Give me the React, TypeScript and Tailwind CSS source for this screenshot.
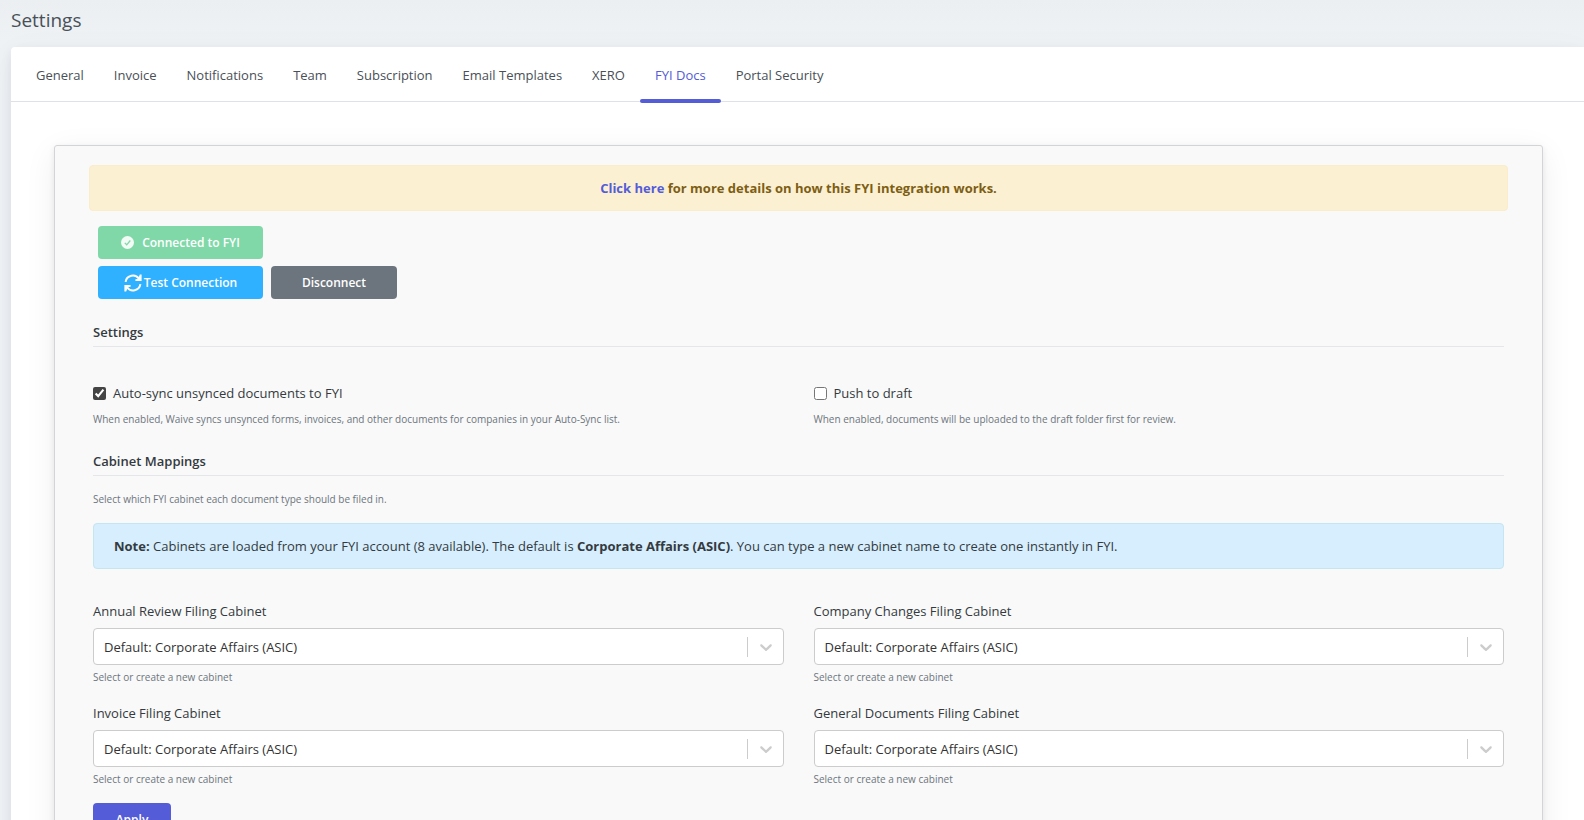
const tabs = [
  "General",
  "Invoice",
  "Notifications",
  "Team",
  "Subscription",
  "Email Templates",
  "XERO",
  "FYI Docs",
  "Portal Security",
];

const cabinets = [
  { id: "annual-review", label: "Annual Review Filing Cabinet" },
  { id: "company-changes", label: "Company Changes Filing Cabinet" },
  { id: "invoice", label: "Invoice Filing Cabinet" },
  { id: "general-documents", label: "General Documents Filing Cabinet" },
];

function CheckIcon() {
  return (
    <svg width="13" height="13" viewBox="0 0 13 13" fill="none" aria-hidden="true">
      <circle cx="6.5" cy="6.5" r="6.5" fill="#f2fbf6" />
      <path d="M3.8 6.9l1.9 1.9 3.6-4.3" stroke="#80d8a8" strokeWidth="1.3" />
    </svg>
  );
}

function SyncIcon() {
  return (
    <svg width="18" height="18" viewBox="0 0 18 18" fill="none" stroke="currentColor" strokeWidth="2" aria-hidden="true">
      <path d="M1.6 7.8A7.4 7.4 0 0 1 15 4.8" />
      <path d="M16.4 10.2A7.4 7.4 0 0 1 3 13.2" />
      <path d="M17.6 .6V7h-6.2V5.2l2.8-.4 1.6-4.2z" fill="currentColor" stroke="none" />
      <path d="M.4 17.4V11h6.2v1.8l-2.8.4-1.6 4.2z" fill="currentColor" stroke="none" />
    </svg>
  );
}

function SectionTitle({ children }: { children: string }) {
  return (
    <h2 className="border-b border-[#e4e6e9] pb-1 text-[13px] leading-5 font-semibold text-[#343a40]">
      {children}
    </h2>
  );
}

function CabinetSelect({ id, label }: { id: string; label: string }) {
  return (
    <div>
      <label htmlFor={id} className="block text-[13px] leading-5">
        {label}
      </label>
      <div className="relative mt-[7px]">
        <select
          id={id}
          className="block h-[37px] w-full appearance-none rounded border border-[#cccccc] bg-white pt-[2px] pr-12 pl-[10px] text-[13px] text-[#333333]"
        >
          <option>Default: Corporate Affairs (ASIC)</option>
        </select>
        <div className="pointer-events-none absolute inset-y-0 right-0 flex items-center gap-2 pr-2 text-[#cccccc]">
          <span className="h-5 w-px bg-[#cccccc]"></span>
          <svg width="20" height="20" viewBox="0 0 20 20" fill="currentColor" aria-hidden="true">
            <path d="M4.516 7.548c0.436-0.446 1.043-0.481 1.576 0l3.908 3.747 3.908-3.747c0.533-0.481 1.141-0.446 1.574 0 0.436 0.445 0.408 1.197 0 1.615-0.406 0.418-4.695 4.502-4.695 4.502-0.217 0.223-0.502 0.335-0.787 0.335s-0.57-0.112-0.789-0.335c0 0-4.287-4.084-4.695-4.502s-0.436-1.17 0-1.615z" />
          </svg>
        </div>
      </div>
      <p className="mt-1 text-[10px] leading-4 text-[#6c757d]">Select or create a new cabinet</p>
    </div>
  );
}

export default function App() {
  return (
    <div className="h-screen overflow-hidden bg-[#eef2f5] bg-linear-to-b from-[#ebeff2] to-[#eef2f5] to-5% pl-[11px] font-['Open_Sans','Noto_Sans',sans-serif] text-[13px] text-[#343a40]">
      <h1 className="pt-[6px] pb-[13px] text-[19px] leading-7 text-[#495057]">Settings</h1>

      <div className="min-h-screen rounded-tl bg-white shadow-[0_7px_35px_rgba(8,21,66,0.04),0_4px_12px_rgba(8,21,66,0.07)]">
        {/* Tabs */}
        <nav className="flex border-b border-[#dee2e6] pl-[10px]">
          {tabs.map((tab) => (
            <a
              key={tab}
              href="#"
              className={
                tab === "FYI Docs"
                  ? "relative px-[15px] pt-[18px] pb-4 leading-5 text-[#545cd8]"
                  : "px-[15px] pt-[18px] pb-4 leading-5 text-[#495057]"
              }
            >
              {tab}
              {tab === "FYI Docs" && (
                <span className="absolute inset-x-0 -bottom-[2px] h-1 rounded-sm bg-[#545cd8]"></span>
              )}
            </a>
          ))}
        </nav>

        {/* FYI panel */}
        <div className="mt-[43px] mr-[41px] ml-[43px] rounded-[3px] border border-[#d3d4d6] bg-[#f9f9f9] px-[34px] pt-[19px] pb-10 shadow-[0_8px_32px_rgba(0,0,0,0.07),0_2px_6px_rgba(0,0,0,0.08)]">
          <div className="rounded border border-[#fbeccb] bg-[#fcf0d3] py-3 text-center leading-5 font-bold text-[#7d5e14]">
            <a href="#" className="text-[#545cd8]">
              Click here
            </a>{" "}
            for more details on how this FYI integration works.
          </div>

          <div className="mt-[15px] flex flex-col gap-[7px] pl-[9px] text-xs font-semibold text-white">
            <button disabled className="flex h-[33px] w-[165px] items-center justify-center gap-2 rounded bg-[#80d8a8]">
              <CheckIcon />
              Connected to FYI
            </button>
            <div className="flex gap-2">
              <button className="flex h-[33px] w-[165px] items-center justify-center gap-[2px] rounded bg-[#30b1ff]">
                <SyncIcon />
                Test Connection
              </button>
              <button className="h-[33px] w-[126px] rounded bg-[#6c757d]">Disconnect</button>
            </div>
          </div>

          <div className="mt-[23px] px-1">
            <SectionTitle>Settings</SectionTitle>
            <div className="mt-[36px] grid grid-cols-2 gap-[30px]">
              <div>
                <label className="flex items-center gap-[7px] leading-5">
                  <input type="checkbox" defaultChecked className="size-[13px] accent-[#444444]" />
                  Auto-sync unsynced documents to FYI
                </label>
                <p className="mt-2 text-[10px] leading-4 text-[#6c757d]">
                  When enabled, Waive syncs unsynced forms, invoices, and other documents for companies in your Auto-Sync list.
                </p>
              </div>
              <div>
                <label className="flex items-center gap-[7px] leading-5">
                  <input type="checkbox" className="size-[13px]" />
                  Push to draft
                </label>
                <p className="mt-2 text-[10px] leading-4 text-[#6c757d]">
                  When enabled, documents will be uploaded to the draft folder first for review.
                </p>
              </div>
            </div>

            <div className="mt-6">
              <SectionTitle>Cabinet Mappings</SectionTitle>
            </div>
            <p className="mt-[15px] text-[10px] leading-4 text-[#6c757d]">
              Select which FYI cabinet each document type should be filed in.
            </p>
            <div className="mt-4 rounded border border-[#c5e6f0] bg-[#d6eefd] px-5 py-3 leading-5">
              <strong>Note:</strong> Cabinets are loaded from your FYI account (8 available). The default is{" "}
              <strong>Corporate Affairs (ASIC)</strong>. You can type a new cabinet name to create one instantly in FYI.
            </div>

            <div className="mt-8 grid grid-cols-2 gap-x-[30px] gap-y-[18px]">
              {cabinets.map((cabinet) => (
                <CabinetSelect key={cabinet.id} id={cabinet.id} label={cabinet.label} />
              ))}
            </div>
            <button className="mt-4 h-[33px] w-[78px] rounded bg-[#545cd8] text-xs font-semibold text-white">Apply</button>
          </div>
        </div>
      </div>
    </div>
  );
}
